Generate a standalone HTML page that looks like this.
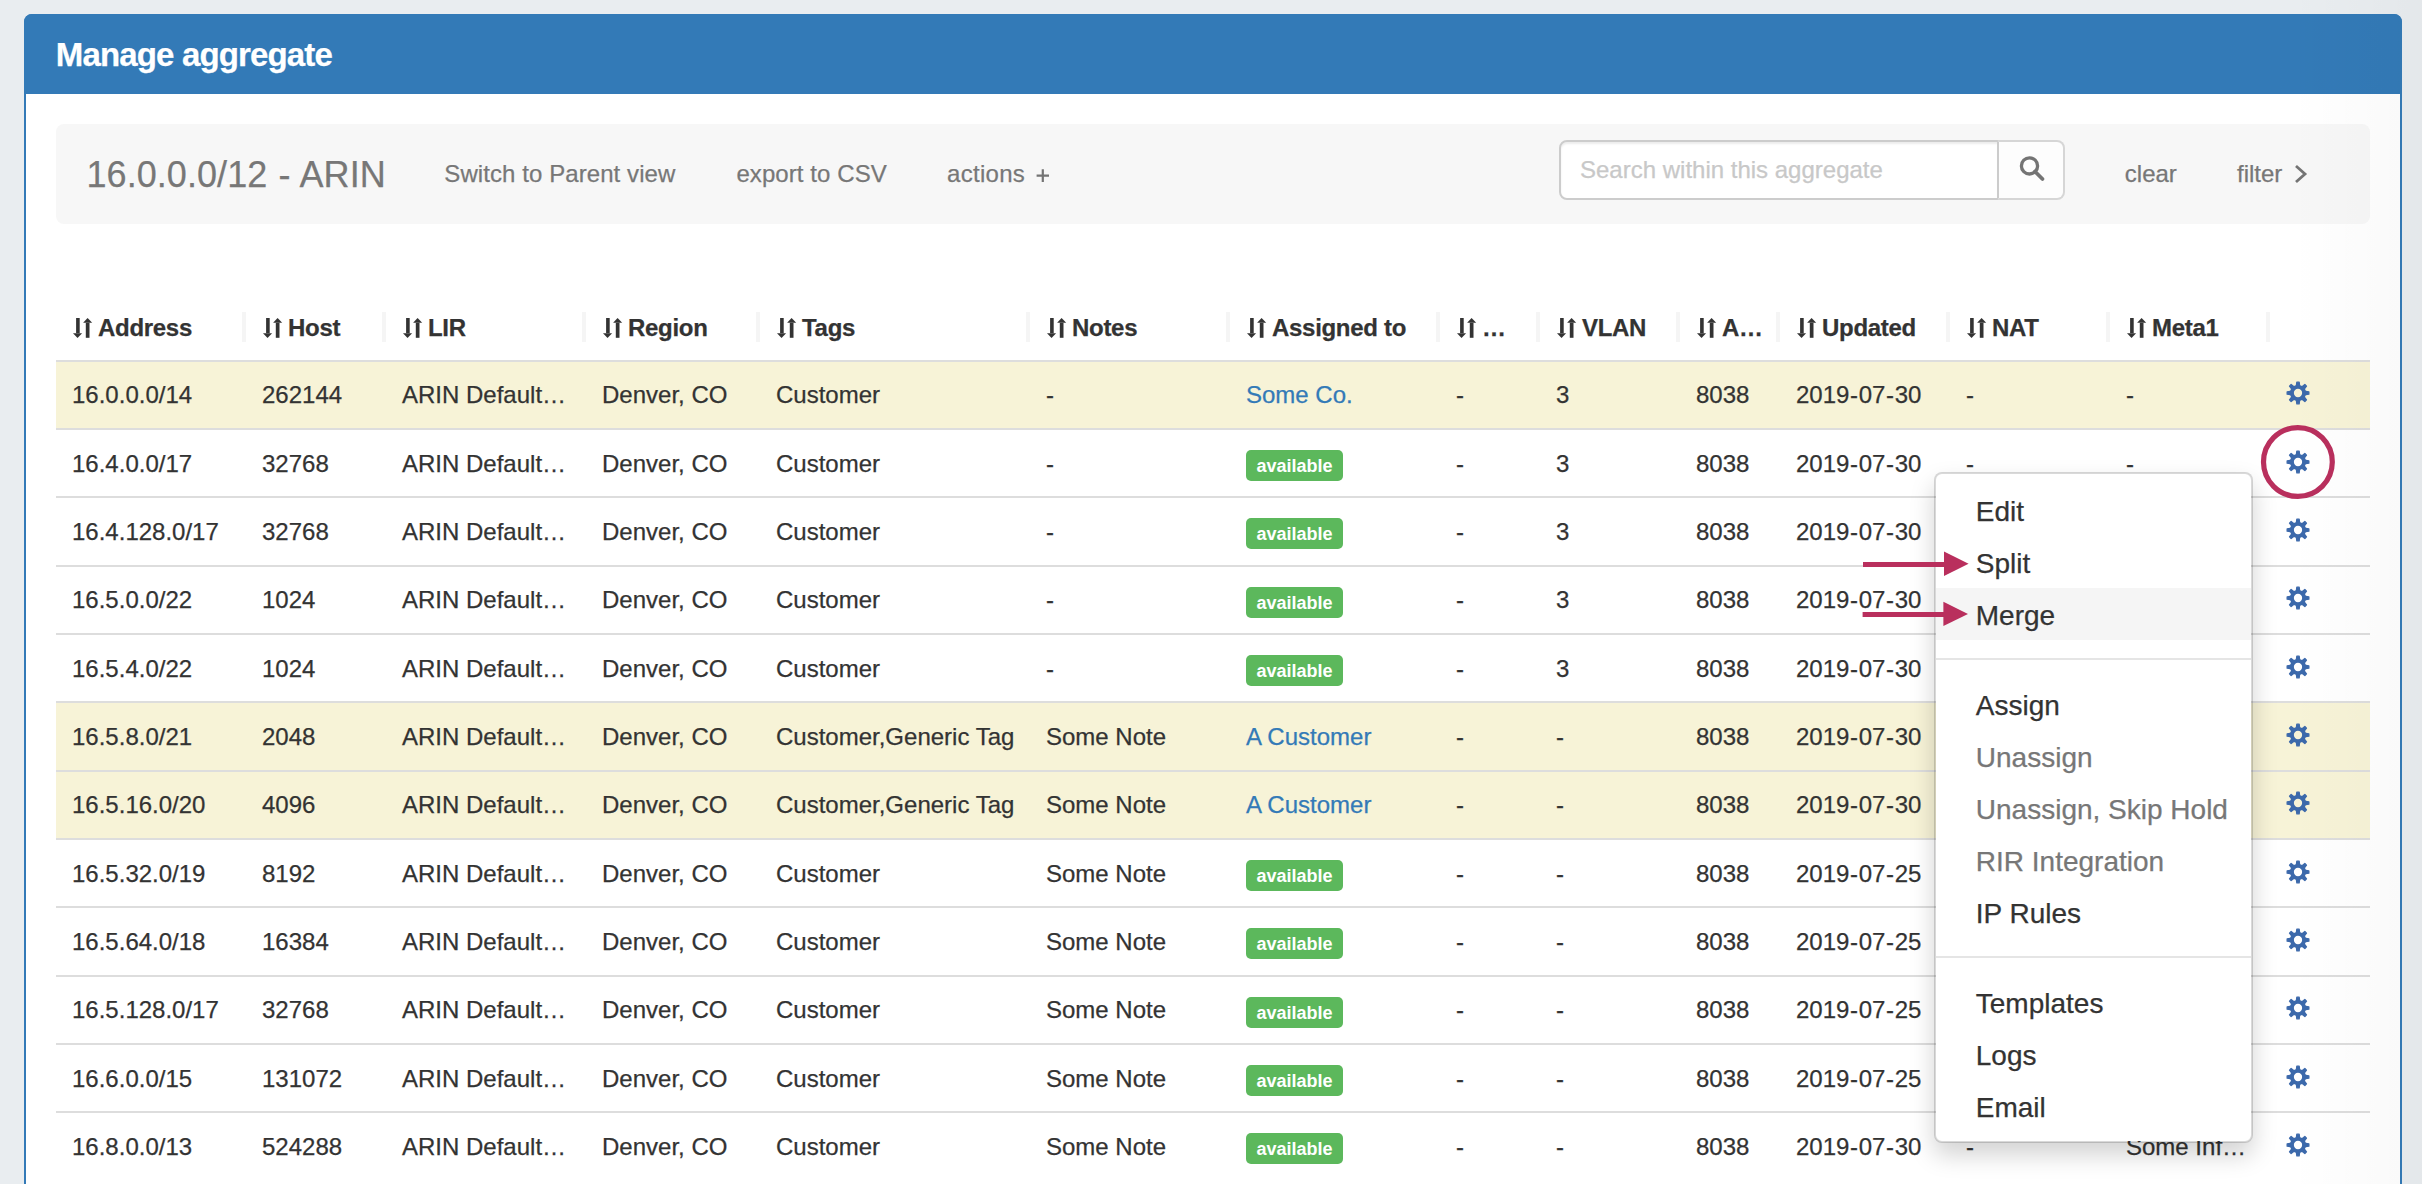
<!DOCTYPE html>
<html><head><meta charset="utf-8"><title>Manage aggregate</title><style>
html,body{margin:0;padding:0;}
body{width:2422px;height:1184px;overflow:hidden;position:relative;background:#e9edf0;font-family:"Liberation Sans", sans-serif;}
.t{position:absolute;line-height:1;white-space:nowrap;-webkit-text-stroke:0.25px currentColor;}
.panel{position:absolute;left:24px;top:14px;width:2378px;height:1400px;box-sizing:border-box;border:2px solid #337ab7;border-radius:8px;background:#fff;}
.phead{position:absolute;left:24px;top:14px;width:2378px;height:80px;background:#337ab7;border-radius:8px 8px 0 0;}
.well{position:absolute;left:56px;top:124px;width:2314px;height:100px;background:#f7f7f7;border-radius:8px;}
.search{position:absolute;left:1559px;top:140px;width:441px;height:60px;box-sizing:border-box;border:2px solid #ccc;border-radius:8px 0 0 8px;background:#fff;box-shadow:inset 0 2px 2px rgba(0,0,0,.075);}
.sbtn{position:absolute;left:1997px;top:140px;width:68px;height:60px;box-sizing:border-box;border:2px solid #d6d6d6;border-left-color:#ccc;border-radius:0 8px 8px 0;background:#fdfdfd;}
.sep{position:absolute;top:312px;width:3.5px;height:30px;background:#f5f5f5;}
.ico{position:absolute;width:20px;height:20px;}
.ico svg{display:block}
.hl{position:absolute;left:56px;width:2314px;height:2px;background:#ddd;}
.yrow{position:absolute;left:56px;width:2314px;background:#f7f3d7;}
.badge{position:absolute;width:97px;height:31px;background:#5cb85c;border-radius:5px;color:#fff;font-weight:bold;font-size:18px;line-height:33px;text-align:center;}
.gear{position:absolute;width:26px;height:26px;}
.gear svg{display:block}
.menu{position:absolute;left:1934px;top:472px;width:319px;height:671px;box-sizing:border-box;border:2px solid rgba(0,0,0,.15);border-radius:8px;background:#fff;box-shadow:0 12px 24px rgba(0,0,0,.175);background-clip:padding-box;}
.mhl{position:absolute;left:1936px;top:588px;width:315px;height:52px;background:#f5f5f5;}
.div1{position:absolute;left:1936px;width:315px;height:2px;background:#e5e5e5;}
.ann{position:absolute;left:0;top:0;}
.vig{position:absolute;left:2290px;top:0;width:132px;height:1184px;background:linear-gradient(to right,rgba(0,0,0,0),rgba(0,0,0,.024));pointer-events:none;}
</style></head>
<body>
<div class="panel"></div><div class="phead"></div><div class="t" style="left:55.80px;top:38.47px;font-size:33px;color:#fff;font-weight:bold;letter-spacing:-0.85px;">Manage aggregate</div>
<div class="well"></div><div class="t" style="left:86.50px;top:156.53px;font-size:36px;color:#777;font-weight:normal;letter-spacing:0.06px;">16.0.0.0/12 <span style="margin:0 1px">-</span> ARIN</div>
<div class="t" style="left:444.30px;top:162.18px;font-size:24px;color:#777;font-weight:normal;letter-spacing:0.08px;">Switch to Parent view</div>
<div class="t" style="left:736.40px;top:162.18px;font-size:24px;color:#777;font-weight:normal;letter-spacing:0.08px;">export to CSV</div>
<div class="t" style="left:947.00px;top:162.18px;font-size:24px;color:#777;font-weight:normal;letter-spacing:0.3px;">actions</div>
<div class="search"></div><div class="sbtn"></div><div class="t" style="left:1580.00px;top:158.18px;font-size:24px;color:#c8c8c8;font-weight:normal;">Search within this aggregate</div>
<div class="t" style="left:2124.80px;top:162.18px;font-size:24px;color:#777;font-weight:normal;">clear</div>
<div class="t" style="left:2237.00px;top:162.18px;font-size:24px;color:#777;font-weight:normal;">filter</div>
<svg class="ann" width="2422" height="300"><circle cx="2029.5" cy="165.9" r="8.1" fill="none" stroke="#747474" stroke-width="3.3"/><line x1="2035" y1="171.5" x2="2042.5" y2="179" stroke="#747474" stroke-width="3.8" stroke-linecap="round"/><path d="M1036.6,175.6 H1049 M1042.8,169.2 V182" stroke="#747474" stroke-width="2.2"/><polyline points="2296,166 2305,174 2296,182" fill="none" stroke="#747474" stroke-width="2.8"/></svg><div class="sep" style="left:242.25px"></div><div class="sep" style="left:382.25px"></div><div class="sep" style="left:582.25px"></div><div class="sep" style="left:756.25px"></div><div class="sep" style="left:1026.25px"></div><div class="sep" style="left:1226.25px"></div><div class="sep" style="left:1436.25px"></div><div class="sep" style="left:1536.25px"></div><div class="sep" style="left:1676.25px"></div><div class="sep" style="left:1776.25px"></div><div class="sep" style="left:1946.25px"></div><div class="sep" style="left:2106.25px"></div><div class="sep" style="left:2266.25px"></div><div class="ico" style="left:72.60px;top:318px"><svg width="20" height="20" viewBox="0 0 20 20"><rect x="3.1" y="0" width="3.6" height="15.2" fill="#333"/><polygon points="0,15.2 9.1,15.2 4.55,20" fill="#333"/><polygon points="14.6,0 10.1,4.8 19.2,4.8" fill="#333"/><rect x="12.8" y="4.8" width="3.7" height="15" fill="#333"/></svg></div><div class="t" style="left:98.00px;top:316.08px;font-size:24px;color:#333;font-weight:bold;letter-spacing:-0.3px;">Address</div>
<div class="ico" style="left:262.60px;top:318px"><svg width="20" height="20" viewBox="0 0 20 20"><rect x="3.1" y="0" width="3.6" height="15.2" fill="#333"/><polygon points="0,15.2 9.1,15.2 4.55,20" fill="#333"/><polygon points="14.6,0 10.1,4.8 19.2,4.8" fill="#333"/><rect x="12.8" y="4.8" width="3.7" height="15" fill="#333"/></svg></div><div class="t" style="left:288.00px;top:316.08px;font-size:24px;color:#333;font-weight:bold;letter-spacing:-0.3px;">Host</div>
<div class="ico" style="left:402.60px;top:318px"><svg width="20" height="20" viewBox="0 0 20 20"><rect x="3.1" y="0" width="3.6" height="15.2" fill="#333"/><polygon points="0,15.2 9.1,15.2 4.55,20" fill="#333"/><polygon points="14.6,0 10.1,4.8 19.2,4.8" fill="#333"/><rect x="12.8" y="4.8" width="3.7" height="15" fill="#333"/></svg></div><div class="t" style="left:428.00px;top:316.08px;font-size:24px;color:#333;font-weight:bold;letter-spacing:-0.3px;">LIR</div>
<div class="ico" style="left:602.60px;top:318px"><svg width="20" height="20" viewBox="0 0 20 20"><rect x="3.1" y="0" width="3.6" height="15.2" fill="#333"/><polygon points="0,15.2 9.1,15.2 4.55,20" fill="#333"/><polygon points="14.6,0 10.1,4.8 19.2,4.8" fill="#333"/><rect x="12.8" y="4.8" width="3.7" height="15" fill="#333"/></svg></div><div class="t" style="left:628.00px;top:316.08px;font-size:24px;color:#333;font-weight:bold;letter-spacing:-0.3px;">Region</div>
<div class="ico" style="left:776.60px;top:318px"><svg width="20" height="20" viewBox="0 0 20 20"><rect x="3.1" y="0" width="3.6" height="15.2" fill="#333"/><polygon points="0,15.2 9.1,15.2 4.55,20" fill="#333"/><polygon points="14.6,0 10.1,4.8 19.2,4.8" fill="#333"/><rect x="12.8" y="4.8" width="3.7" height="15" fill="#333"/></svg></div><div class="t" style="left:802.00px;top:316.08px;font-size:24px;color:#333;font-weight:bold;letter-spacing:-0.3px;">Tags</div>
<div class="ico" style="left:1046.60px;top:318px"><svg width="20" height="20" viewBox="0 0 20 20"><rect x="3.1" y="0" width="3.6" height="15.2" fill="#333"/><polygon points="0,15.2 9.1,15.2 4.55,20" fill="#333"/><polygon points="14.6,0 10.1,4.8 19.2,4.8" fill="#333"/><rect x="12.8" y="4.8" width="3.7" height="15" fill="#333"/></svg></div><div class="t" style="left:1072.00px;top:316.08px;font-size:24px;color:#333;font-weight:bold;letter-spacing:-0.3px;">Notes</div>
<div class="ico" style="left:1246.60px;top:318px"><svg width="20" height="20" viewBox="0 0 20 20"><rect x="3.1" y="0" width="3.6" height="15.2" fill="#333"/><polygon points="0,15.2 9.1,15.2 4.55,20" fill="#333"/><polygon points="14.6,0 10.1,4.8 19.2,4.8" fill="#333"/><rect x="12.8" y="4.8" width="3.7" height="15" fill="#333"/></svg></div><div class="t" style="left:1272.00px;top:316.08px;font-size:24px;color:#333;font-weight:bold;letter-spacing:-0.3px;">Assigned to</div>
<div class="ico" style="left:1456.60px;top:318px"><svg width="20" height="20" viewBox="0 0 20 20"><rect x="3.1" y="0" width="3.6" height="15.2" fill="#333"/><polygon points="0,15.2 9.1,15.2 4.55,20" fill="#333"/><polygon points="14.6,0 10.1,4.8 19.2,4.8" fill="#333"/><rect x="12.8" y="4.8" width="3.7" height="15" fill="#333"/></svg></div><div class="t" style="left:1482.00px;top:316.08px;font-size:24px;color:#333;font-weight:bold;letter-spacing:-0.3px;">…</div>
<div class="ico" style="left:1556.60px;top:318px"><svg width="20" height="20" viewBox="0 0 20 20"><rect x="3.1" y="0" width="3.6" height="15.2" fill="#333"/><polygon points="0,15.2 9.1,15.2 4.55,20" fill="#333"/><polygon points="14.6,0 10.1,4.8 19.2,4.8" fill="#333"/><rect x="12.8" y="4.8" width="3.7" height="15" fill="#333"/></svg></div><div class="t" style="left:1582.00px;top:316.08px;font-size:24px;color:#333;font-weight:bold;letter-spacing:-0.3px;">VLAN</div>
<div class="ico" style="left:1696.60px;top:318px"><svg width="20" height="20" viewBox="0 0 20 20"><rect x="3.1" y="0" width="3.6" height="15.2" fill="#333"/><polygon points="0,15.2 9.1,15.2 4.55,20" fill="#333"/><polygon points="14.6,0 10.1,4.8 19.2,4.8" fill="#333"/><rect x="12.8" y="4.8" width="3.7" height="15" fill="#333"/></svg></div><div class="t" style="left:1722.00px;top:316.08px;font-size:24px;color:#333;font-weight:bold;letter-spacing:-0.3px;">A…</div>
<div class="ico" style="left:1796.60px;top:318px"><svg width="20" height="20" viewBox="0 0 20 20"><rect x="3.1" y="0" width="3.6" height="15.2" fill="#333"/><polygon points="0,15.2 9.1,15.2 4.55,20" fill="#333"/><polygon points="14.6,0 10.1,4.8 19.2,4.8" fill="#333"/><rect x="12.8" y="4.8" width="3.7" height="15" fill="#333"/></svg></div><div class="t" style="left:1822.00px;top:316.08px;font-size:24px;color:#333;font-weight:bold;letter-spacing:-0.3px;">Updated</div>
<div class="ico" style="left:1966.60px;top:318px"><svg width="20" height="20" viewBox="0 0 20 20"><rect x="3.1" y="0" width="3.6" height="15.2" fill="#333"/><polygon points="0,15.2 9.1,15.2 4.55,20" fill="#333"/><polygon points="14.6,0 10.1,4.8 19.2,4.8" fill="#333"/><rect x="12.8" y="4.8" width="3.7" height="15" fill="#333"/></svg></div><div class="t" style="left:1992.00px;top:316.08px;font-size:24px;color:#333;font-weight:bold;letter-spacing:-0.3px;">NAT</div>
<div class="ico" style="left:2126.60px;top:318px"><svg width="20" height="20" viewBox="0 0 20 20"><rect x="3.1" y="0" width="3.6" height="15.2" fill="#333"/><polygon points="0,15.2 9.1,15.2 4.55,20" fill="#333"/><polygon points="14.6,0 10.1,4.8 19.2,4.8" fill="#333"/><rect x="12.8" y="4.8" width="3.7" height="15" fill="#333"/></svg></div><div class="t" style="left:2152.00px;top:316.08px;font-size:24px;color:#333;font-weight:bold;letter-spacing:-0.3px;">Meta1</div>
<div class="yrow" style="top:362px;height:66px"></div><div class="hl" style="top:360px"></div><div class="t" style="left:72.00px;top:383.45px;font-size:24px;color:#333;font-weight:normal;">16.0.0.0/14</div>
<div class="t" style="left:262.00px;top:383.45px;font-size:24px;color:#333;font-weight:normal;">262144</div>
<div class="t" style="left:402.00px;top:383.45px;font-size:24px;color:#333;font-weight:normal;">ARIN Default…</div>
<div class="t" style="left:602.00px;top:383.45px;font-size:24px;color:#333;font-weight:normal;">Denver, CO</div>
<div class="t" style="left:776.00px;top:383.45px;font-size:24px;color:#333;font-weight:normal;">Customer</div>
<div class="t" style="left:1046.00px;top:383.45px;font-size:24px;color:#333;font-weight:normal;">-</div>
<div class="t" style="left:1246.00px;top:383.45px;font-size:24px;color:#337ab7;font-weight:normal;">Some Co.</div>
<div class="t" style="left:1456.00px;top:383.45px;font-size:24px;color:#333;font-weight:normal;">-</div>
<div class="t" style="left:1556.00px;top:383.45px;font-size:24px;color:#333;font-weight:normal;">3</div>
<div class="t" style="left:1696.00px;top:383.45px;font-size:24px;color:#333;font-weight:normal;">8038</div>
<div class="t" style="left:1796.00px;top:383.45px;font-size:24px;color:#333;font-weight:normal;">2019<span style="margin:0 0.67px">-</span>07<span style="margin:0 0.67px">-</span>30</div>
<div class="t" style="left:1966.00px;top:383.45px;font-size:24px;color:#333;font-weight:normal;">-</div>
<div class="t" style="left:2126.00px;top:383.45px;font-size:24px;color:#333;font-weight:normal;">-</div>
<div class="gear" style="left:2285px;top:380.17px"><svg width="26" height="26" viewBox="-13 -13 26 26"><path d="M6.50,-1.75 L10.85,-1.15 L10.85,1.15 L6.50,1.75Z M5.83,3.36 L8.49,6.86 L6.86,8.49 L3.36,5.83Z M1.75,6.50 L1.15,10.85 L-1.15,10.85 L-1.75,6.50Z M-3.36,5.83 L-6.86,8.49 L-8.49,6.86 L-5.83,3.36Z M-6.50,1.75 L-10.85,1.15 L-10.85,-1.15 L-6.50,-1.75Z M-5.83,-3.36 L-8.49,-6.86 L-6.86,-8.49 L-3.36,-5.83Z M-1.75,-6.50 L-1.15,-10.85 L1.15,-10.85 L1.75,-6.50Z M3.36,-5.83 L6.86,-8.49 L8.49,-6.86 L5.83,-3.36Z " fill="#3c69ab" stroke="#3c69ab" stroke-width="1.3" stroke-linejoin="round"/><circle r="6.1" fill="none" stroke="#3c69ab" stroke-width="3.9"/></svg></div><div class="hl" style="top:428px"></div><div class="t" style="left:72.00px;top:451.79px;font-size:24px;color:#333;font-weight:normal;">16.4.0.0/17</div>
<div class="t" style="left:262.00px;top:451.79px;font-size:24px;color:#333;font-weight:normal;">32768</div>
<div class="t" style="left:402.00px;top:451.79px;font-size:24px;color:#333;font-weight:normal;">ARIN Default…</div>
<div class="t" style="left:602.00px;top:451.79px;font-size:24px;color:#333;font-weight:normal;">Denver, CO</div>
<div class="t" style="left:776.00px;top:451.79px;font-size:24px;color:#333;font-weight:normal;">Customer</div>
<div class="t" style="left:1046.00px;top:451.79px;font-size:24px;color:#333;font-weight:normal;">-</div>
<div class="badge" style="left:1246px;top:450px">available</div><div class="t" style="left:1456.00px;top:451.79px;font-size:24px;color:#333;font-weight:normal;">-</div>
<div class="t" style="left:1556.00px;top:451.79px;font-size:24px;color:#333;font-weight:normal;">3</div>
<div class="t" style="left:1696.00px;top:451.79px;font-size:24px;color:#333;font-weight:normal;">8038</div>
<div class="t" style="left:1796.00px;top:451.79px;font-size:24px;color:#333;font-weight:normal;">2019<span style="margin:0 0.67px">-</span>07<span style="margin:0 0.67px">-</span>30</div>
<div class="t" style="left:1966.00px;top:451.79px;font-size:24px;color:#333;font-weight:normal;">-</div>
<div class="t" style="left:2126.00px;top:451.79px;font-size:24px;color:#333;font-weight:normal;">-</div>
<div class="gear" style="left:2285px;top:448.50px"><svg width="26" height="26" viewBox="-13 -13 26 26"><path d="M6.50,-1.75 L10.85,-1.15 L10.85,1.15 L6.50,1.75Z M5.83,3.36 L8.49,6.86 L6.86,8.49 L3.36,5.83Z M1.75,6.50 L1.15,10.85 L-1.15,10.85 L-1.75,6.50Z M-3.36,5.83 L-6.86,8.49 L-8.49,6.86 L-5.83,3.36Z M-6.50,1.75 L-10.85,1.15 L-10.85,-1.15 L-6.50,-1.75Z M-5.83,-3.36 L-8.49,-6.86 L-6.86,-8.49 L-3.36,-5.83Z M-1.75,-6.50 L-1.15,-10.85 L1.15,-10.85 L1.75,-6.50Z M3.36,-5.83 L6.86,-8.49 L8.49,-6.86 L5.83,-3.36Z " fill="#3c69ab" stroke="#3c69ab" stroke-width="1.3" stroke-linejoin="round"/><circle r="6.1" fill="none" stroke="#3c69ab" stroke-width="3.9"/></svg></div><div class="hl" style="top:496px"></div><div class="t" style="left:72.00px;top:520.12px;font-size:24px;color:#333;font-weight:normal;">16.4.128.0/17</div>
<div class="t" style="left:262.00px;top:520.12px;font-size:24px;color:#333;font-weight:normal;">32768</div>
<div class="t" style="left:402.00px;top:520.12px;font-size:24px;color:#333;font-weight:normal;">ARIN Default…</div>
<div class="t" style="left:602.00px;top:520.12px;font-size:24px;color:#333;font-weight:normal;">Denver, CO</div>
<div class="t" style="left:776.00px;top:520.12px;font-size:24px;color:#333;font-weight:normal;">Customer</div>
<div class="t" style="left:1046.00px;top:520.12px;font-size:24px;color:#333;font-weight:normal;">-</div>
<div class="badge" style="left:1246px;top:518px">available</div><div class="t" style="left:1456.00px;top:520.12px;font-size:24px;color:#333;font-weight:normal;">-</div>
<div class="t" style="left:1556.00px;top:520.12px;font-size:24px;color:#333;font-weight:normal;">3</div>
<div class="t" style="left:1696.00px;top:520.12px;font-size:24px;color:#333;font-weight:normal;">8038</div>
<div class="t" style="left:1796.00px;top:520.12px;font-size:24px;color:#333;font-weight:normal;">2019<span style="margin:0 0.67px">-</span>07<span style="margin:0 0.67px">-</span>30</div>
<div class="t" style="left:1966.00px;top:520.12px;font-size:24px;color:#333;font-weight:normal;">-</div>
<div class="t" style="left:2126.00px;top:520.12px;font-size:24px;color:#333;font-weight:normal;">-</div>
<div class="gear" style="left:2285px;top:516.84px"><svg width="26" height="26" viewBox="-13 -13 26 26"><path d="M6.50,-1.75 L10.85,-1.15 L10.85,1.15 L6.50,1.75Z M5.83,3.36 L8.49,6.86 L6.86,8.49 L3.36,5.83Z M1.75,6.50 L1.15,10.85 L-1.15,10.85 L-1.75,6.50Z M-3.36,5.83 L-6.86,8.49 L-8.49,6.86 L-5.83,3.36Z M-6.50,1.75 L-10.85,1.15 L-10.85,-1.15 L-6.50,-1.75Z M-5.83,-3.36 L-8.49,-6.86 L-6.86,-8.49 L-3.36,-5.83Z M-1.75,-6.50 L-1.15,-10.85 L1.15,-10.85 L1.75,-6.50Z M3.36,-5.83 L6.86,-8.49 L8.49,-6.86 L5.83,-3.36Z " fill="#3c69ab" stroke="#3c69ab" stroke-width="1.3" stroke-linejoin="round"/><circle r="6.1" fill="none" stroke="#3c69ab" stroke-width="3.9"/></svg></div><div class="hl" style="top:565px"></div><div class="t" style="left:72.00px;top:588.45px;font-size:24px;color:#333;font-weight:normal;">16.5.0.0/22</div>
<div class="t" style="left:262.00px;top:588.45px;font-size:24px;color:#333;font-weight:normal;">1024</div>
<div class="t" style="left:402.00px;top:588.45px;font-size:24px;color:#333;font-weight:normal;">ARIN Default…</div>
<div class="t" style="left:602.00px;top:588.45px;font-size:24px;color:#333;font-weight:normal;">Denver, CO</div>
<div class="t" style="left:776.00px;top:588.45px;font-size:24px;color:#333;font-weight:normal;">Customer</div>
<div class="t" style="left:1046.00px;top:588.45px;font-size:24px;color:#333;font-weight:normal;">-</div>
<div class="badge" style="left:1246px;top:587px">available</div><div class="t" style="left:1456.00px;top:588.45px;font-size:24px;color:#333;font-weight:normal;">-</div>
<div class="t" style="left:1556.00px;top:588.45px;font-size:24px;color:#333;font-weight:normal;">3</div>
<div class="t" style="left:1696.00px;top:588.45px;font-size:24px;color:#333;font-weight:normal;">8038</div>
<div class="t" style="left:1796.00px;top:588.45px;font-size:24px;color:#333;font-weight:normal;">2019<span style="margin:0 0.67px">-</span>07<span style="margin:0 0.67px">-</span>30</div>
<div class="t" style="left:1966.00px;top:588.45px;font-size:24px;color:#333;font-weight:normal;">-</div>
<div class="t" style="left:2126.00px;top:588.45px;font-size:24px;color:#333;font-weight:normal;">-</div>
<div class="gear" style="left:2285px;top:585.17px"><svg width="26" height="26" viewBox="-13 -13 26 26"><path d="M6.50,-1.75 L10.85,-1.15 L10.85,1.15 L6.50,1.75Z M5.83,3.36 L8.49,6.86 L6.86,8.49 L3.36,5.83Z M1.75,6.50 L1.15,10.85 L-1.15,10.85 L-1.75,6.50Z M-3.36,5.83 L-6.86,8.49 L-8.49,6.86 L-5.83,3.36Z M-6.50,1.75 L-10.85,1.15 L-10.85,-1.15 L-6.50,-1.75Z M-5.83,-3.36 L-8.49,-6.86 L-6.86,-8.49 L-3.36,-5.83Z M-1.75,-6.50 L-1.15,-10.85 L1.15,-10.85 L1.75,-6.50Z M3.36,-5.83 L6.86,-8.49 L8.49,-6.86 L5.83,-3.36Z " fill="#3c69ab" stroke="#3c69ab" stroke-width="1.3" stroke-linejoin="round"/><circle r="6.1" fill="none" stroke="#3c69ab" stroke-width="3.9"/></svg></div><div class="hl" style="top:633px"></div><div class="t" style="left:72.00px;top:656.79px;font-size:24px;color:#333;font-weight:normal;">16.5.4.0/22</div>
<div class="t" style="left:262.00px;top:656.79px;font-size:24px;color:#333;font-weight:normal;">1024</div>
<div class="t" style="left:402.00px;top:656.79px;font-size:24px;color:#333;font-weight:normal;">ARIN Default…</div>
<div class="t" style="left:602.00px;top:656.79px;font-size:24px;color:#333;font-weight:normal;">Denver, CO</div>
<div class="t" style="left:776.00px;top:656.79px;font-size:24px;color:#333;font-weight:normal;">Customer</div>
<div class="t" style="left:1046.00px;top:656.79px;font-size:24px;color:#333;font-weight:normal;">-</div>
<div class="badge" style="left:1246px;top:655px">available</div><div class="t" style="left:1456.00px;top:656.79px;font-size:24px;color:#333;font-weight:normal;">-</div>
<div class="t" style="left:1556.00px;top:656.79px;font-size:24px;color:#333;font-weight:normal;">3</div>
<div class="t" style="left:1696.00px;top:656.79px;font-size:24px;color:#333;font-weight:normal;">8038</div>
<div class="t" style="left:1796.00px;top:656.79px;font-size:24px;color:#333;font-weight:normal;">2019<span style="margin:0 0.67px">-</span>07<span style="margin:0 0.67px">-</span>30</div>
<div class="t" style="left:1966.00px;top:656.79px;font-size:24px;color:#333;font-weight:normal;">-</div>
<div class="t" style="left:2126.00px;top:656.79px;font-size:24px;color:#333;font-weight:normal;">-</div>
<div class="gear" style="left:2285px;top:653.50px"><svg width="26" height="26" viewBox="-13 -13 26 26"><path d="M6.50,-1.75 L10.85,-1.15 L10.85,1.15 L6.50,1.75Z M5.83,3.36 L8.49,6.86 L6.86,8.49 L3.36,5.83Z M1.75,6.50 L1.15,10.85 L-1.15,10.85 L-1.75,6.50Z M-3.36,5.83 L-6.86,8.49 L-8.49,6.86 L-5.83,3.36Z M-6.50,1.75 L-10.85,1.15 L-10.85,-1.15 L-6.50,-1.75Z M-5.83,-3.36 L-8.49,-6.86 L-6.86,-8.49 L-3.36,-5.83Z M-1.75,-6.50 L-1.15,-10.85 L1.15,-10.85 L1.75,-6.50Z M3.36,-5.83 L6.86,-8.49 L8.49,-6.86 L5.83,-3.36Z " fill="#3c69ab" stroke="#3c69ab" stroke-width="1.3" stroke-linejoin="round"/><circle r="6.1" fill="none" stroke="#3c69ab" stroke-width="3.9"/></svg></div><div class="yrow" style="top:703px;height:67px"></div><div class="hl" style="top:701px"></div><div class="t" style="left:72.00px;top:725.12px;font-size:24px;color:#333;font-weight:normal;">16.5.8.0/21</div>
<div class="t" style="left:262.00px;top:725.12px;font-size:24px;color:#333;font-weight:normal;">2048</div>
<div class="t" style="left:402.00px;top:725.12px;font-size:24px;color:#333;font-weight:normal;">ARIN Default…</div>
<div class="t" style="left:602.00px;top:725.12px;font-size:24px;color:#333;font-weight:normal;">Denver, CO</div>
<div class="t" style="left:776.00px;top:725.12px;font-size:24px;color:#333;font-weight:normal;">Customer,Generic Tag</div>
<div class="t" style="left:1046.00px;top:725.12px;font-size:24px;color:#333;font-weight:normal;">Some Note</div>
<div class="t" style="left:1246.00px;top:725.12px;font-size:24px;color:#337ab7;font-weight:normal;">A Customer</div>
<div class="t" style="left:1456.00px;top:725.12px;font-size:24px;color:#333;font-weight:normal;">-</div>
<div class="t" style="left:1556.00px;top:725.12px;font-size:24px;color:#333;font-weight:normal;">-</div>
<div class="t" style="left:1696.00px;top:725.12px;font-size:24px;color:#333;font-weight:normal;">8038</div>
<div class="t" style="left:1796.00px;top:725.12px;font-size:24px;color:#333;font-weight:normal;">2019<span style="margin:0 0.67px">-</span>07<span style="margin:0 0.67px">-</span>30</div>
<div class="t" style="left:1966.00px;top:725.12px;font-size:24px;color:#333;font-weight:normal;">-</div>
<div class="t" style="left:2126.00px;top:725.12px;font-size:24px;color:#333;font-weight:normal;">-</div>
<div class="gear" style="left:2285px;top:721.84px"><svg width="26" height="26" viewBox="-13 -13 26 26"><path d="M6.50,-1.75 L10.85,-1.15 L10.85,1.15 L6.50,1.75Z M5.83,3.36 L8.49,6.86 L6.86,8.49 L3.36,5.83Z M1.75,6.50 L1.15,10.85 L-1.15,10.85 L-1.75,6.50Z M-3.36,5.83 L-6.86,8.49 L-8.49,6.86 L-5.83,3.36Z M-6.50,1.75 L-10.85,1.15 L-10.85,-1.15 L-6.50,-1.75Z M-5.83,-3.36 L-8.49,-6.86 L-6.86,-8.49 L-3.36,-5.83Z M-1.75,-6.50 L-1.15,-10.85 L1.15,-10.85 L1.75,-6.50Z M3.36,-5.83 L6.86,-8.49 L8.49,-6.86 L5.83,-3.36Z " fill="#3c69ab" stroke="#3c69ab" stroke-width="1.3" stroke-linejoin="round"/><circle r="6.1" fill="none" stroke="#3c69ab" stroke-width="3.9"/></svg></div><div class="yrow" style="top:772px;height:66px"></div><div class="hl" style="top:770px"></div><div class="t" style="left:72.00px;top:793.45px;font-size:24px;color:#333;font-weight:normal;">16.5.16.0/20</div>
<div class="t" style="left:262.00px;top:793.45px;font-size:24px;color:#333;font-weight:normal;">4096</div>
<div class="t" style="left:402.00px;top:793.45px;font-size:24px;color:#333;font-weight:normal;">ARIN Default…</div>
<div class="t" style="left:602.00px;top:793.45px;font-size:24px;color:#333;font-weight:normal;">Denver, CO</div>
<div class="t" style="left:776.00px;top:793.45px;font-size:24px;color:#333;font-weight:normal;">Customer,Generic Tag</div>
<div class="t" style="left:1046.00px;top:793.45px;font-size:24px;color:#333;font-weight:normal;">Some Note</div>
<div class="t" style="left:1246.00px;top:793.45px;font-size:24px;color:#337ab7;font-weight:normal;">A Customer</div>
<div class="t" style="left:1456.00px;top:793.45px;font-size:24px;color:#333;font-weight:normal;">-</div>
<div class="t" style="left:1556.00px;top:793.45px;font-size:24px;color:#333;font-weight:normal;">-</div>
<div class="t" style="left:1696.00px;top:793.45px;font-size:24px;color:#333;font-weight:normal;">8038</div>
<div class="t" style="left:1796.00px;top:793.45px;font-size:24px;color:#333;font-weight:normal;">2019<span style="margin:0 0.67px">-</span>07<span style="margin:0 0.67px">-</span>30</div>
<div class="t" style="left:1966.00px;top:793.45px;font-size:24px;color:#333;font-weight:normal;">-</div>
<div class="t" style="left:2126.00px;top:793.45px;font-size:24px;color:#333;font-weight:normal;">-</div>
<div class="gear" style="left:2285px;top:790.17px"><svg width="26" height="26" viewBox="-13 -13 26 26"><path d="M6.50,-1.75 L10.85,-1.15 L10.85,1.15 L6.50,1.75Z M5.83,3.36 L8.49,6.86 L6.86,8.49 L3.36,5.83Z M1.75,6.50 L1.15,10.85 L-1.15,10.85 L-1.75,6.50Z M-3.36,5.83 L-6.86,8.49 L-8.49,6.86 L-5.83,3.36Z M-6.50,1.75 L-10.85,1.15 L-10.85,-1.15 L-6.50,-1.75Z M-5.83,-3.36 L-8.49,-6.86 L-6.86,-8.49 L-3.36,-5.83Z M-1.75,-6.50 L-1.15,-10.85 L1.15,-10.85 L1.75,-6.50Z M3.36,-5.83 L6.86,-8.49 L8.49,-6.86 L5.83,-3.36Z " fill="#3c69ab" stroke="#3c69ab" stroke-width="1.3" stroke-linejoin="round"/><circle r="6.1" fill="none" stroke="#3c69ab" stroke-width="3.9"/></svg></div><div class="hl" style="top:838px"></div><div class="t" style="left:72.00px;top:861.79px;font-size:24px;color:#333;font-weight:normal;">16.5.32.0/19</div>
<div class="t" style="left:262.00px;top:861.79px;font-size:24px;color:#333;font-weight:normal;">8192</div>
<div class="t" style="left:402.00px;top:861.79px;font-size:24px;color:#333;font-weight:normal;">ARIN Default…</div>
<div class="t" style="left:602.00px;top:861.79px;font-size:24px;color:#333;font-weight:normal;">Denver, CO</div>
<div class="t" style="left:776.00px;top:861.79px;font-size:24px;color:#333;font-weight:normal;">Customer</div>
<div class="t" style="left:1046.00px;top:861.79px;font-size:24px;color:#333;font-weight:normal;">Some Note</div>
<div class="badge" style="left:1246px;top:860px">available</div><div class="t" style="left:1456.00px;top:861.79px;font-size:24px;color:#333;font-weight:normal;">-</div>
<div class="t" style="left:1556.00px;top:861.79px;font-size:24px;color:#333;font-weight:normal;">-</div>
<div class="t" style="left:1696.00px;top:861.79px;font-size:24px;color:#333;font-weight:normal;">8038</div>
<div class="t" style="left:1796.00px;top:861.79px;font-size:24px;color:#333;font-weight:normal;">2019<span style="margin:0 0.67px">-</span>07<span style="margin:0 0.67px">-</span>25</div>
<div class="t" style="left:1966.00px;top:861.79px;font-size:24px;color:#333;font-weight:normal;">-</div>
<div class="t" style="left:2126.00px;top:861.79px;font-size:24px;color:#333;font-weight:normal;">-</div>
<div class="gear" style="left:2285px;top:858.50px"><svg width="26" height="26" viewBox="-13 -13 26 26"><path d="M6.50,-1.75 L10.85,-1.15 L10.85,1.15 L6.50,1.75Z M5.83,3.36 L8.49,6.86 L6.86,8.49 L3.36,5.83Z M1.75,6.50 L1.15,10.85 L-1.15,10.85 L-1.75,6.50Z M-3.36,5.83 L-6.86,8.49 L-8.49,6.86 L-5.83,3.36Z M-6.50,1.75 L-10.85,1.15 L-10.85,-1.15 L-6.50,-1.75Z M-5.83,-3.36 L-8.49,-6.86 L-6.86,-8.49 L-3.36,-5.83Z M-1.75,-6.50 L-1.15,-10.85 L1.15,-10.85 L1.75,-6.50Z M3.36,-5.83 L6.86,-8.49 L8.49,-6.86 L5.83,-3.36Z " fill="#3c69ab" stroke="#3c69ab" stroke-width="1.3" stroke-linejoin="round"/><circle r="6.1" fill="none" stroke="#3c69ab" stroke-width="3.9"/></svg></div><div class="hl" style="top:906px"></div><div class="t" style="left:72.00px;top:930.12px;font-size:24px;color:#333;font-weight:normal;">16.5.64.0/18</div>
<div class="t" style="left:262.00px;top:930.12px;font-size:24px;color:#333;font-weight:normal;">16384</div>
<div class="t" style="left:402.00px;top:930.12px;font-size:24px;color:#333;font-weight:normal;">ARIN Default…</div>
<div class="t" style="left:602.00px;top:930.12px;font-size:24px;color:#333;font-weight:normal;">Denver, CO</div>
<div class="t" style="left:776.00px;top:930.12px;font-size:24px;color:#333;font-weight:normal;">Customer</div>
<div class="t" style="left:1046.00px;top:930.12px;font-size:24px;color:#333;font-weight:normal;">Some Note</div>
<div class="badge" style="left:1246px;top:928px">available</div><div class="t" style="left:1456.00px;top:930.12px;font-size:24px;color:#333;font-weight:normal;">-</div>
<div class="t" style="left:1556.00px;top:930.12px;font-size:24px;color:#333;font-weight:normal;">-</div>
<div class="t" style="left:1696.00px;top:930.12px;font-size:24px;color:#333;font-weight:normal;">8038</div>
<div class="t" style="left:1796.00px;top:930.12px;font-size:24px;color:#333;font-weight:normal;">2019<span style="margin:0 0.67px">-</span>07<span style="margin:0 0.67px">-</span>25</div>
<div class="t" style="left:1966.00px;top:930.12px;font-size:24px;color:#333;font-weight:normal;">-</div>
<div class="t" style="left:2126.00px;top:930.12px;font-size:24px;color:#333;font-weight:normal;">-</div>
<div class="gear" style="left:2285px;top:926.84px"><svg width="26" height="26" viewBox="-13 -13 26 26"><path d="M6.50,-1.75 L10.85,-1.15 L10.85,1.15 L6.50,1.75Z M5.83,3.36 L8.49,6.86 L6.86,8.49 L3.36,5.83Z M1.75,6.50 L1.15,10.85 L-1.15,10.85 L-1.75,6.50Z M-3.36,5.83 L-6.86,8.49 L-8.49,6.86 L-5.83,3.36Z M-6.50,1.75 L-10.85,1.15 L-10.85,-1.15 L-6.50,-1.75Z M-5.83,-3.36 L-8.49,-6.86 L-6.86,-8.49 L-3.36,-5.83Z M-1.75,-6.50 L-1.15,-10.85 L1.15,-10.85 L1.75,-6.50Z M3.36,-5.83 L6.86,-8.49 L8.49,-6.86 L5.83,-3.36Z " fill="#3c69ab" stroke="#3c69ab" stroke-width="1.3" stroke-linejoin="round"/><circle r="6.1" fill="none" stroke="#3c69ab" stroke-width="3.9"/></svg></div><div class="hl" style="top:975px"></div><div class="t" style="left:72.00px;top:998.45px;font-size:24px;color:#333;font-weight:normal;">16.5.128.0/17</div>
<div class="t" style="left:262.00px;top:998.45px;font-size:24px;color:#333;font-weight:normal;">32768</div>
<div class="t" style="left:402.00px;top:998.45px;font-size:24px;color:#333;font-weight:normal;">ARIN Default…</div>
<div class="t" style="left:602.00px;top:998.45px;font-size:24px;color:#333;font-weight:normal;">Denver, CO</div>
<div class="t" style="left:776.00px;top:998.45px;font-size:24px;color:#333;font-weight:normal;">Customer</div>
<div class="t" style="left:1046.00px;top:998.45px;font-size:24px;color:#333;font-weight:normal;">Some Note</div>
<div class="badge" style="left:1246px;top:997px">available</div><div class="t" style="left:1456.00px;top:998.45px;font-size:24px;color:#333;font-weight:normal;">-</div>
<div class="t" style="left:1556.00px;top:998.45px;font-size:24px;color:#333;font-weight:normal;">-</div>
<div class="t" style="left:1696.00px;top:998.45px;font-size:24px;color:#333;font-weight:normal;">8038</div>
<div class="t" style="left:1796.00px;top:998.45px;font-size:24px;color:#333;font-weight:normal;">2019<span style="margin:0 0.67px">-</span>07<span style="margin:0 0.67px">-</span>25</div>
<div class="t" style="left:1966.00px;top:998.45px;font-size:24px;color:#333;font-weight:normal;">-</div>
<div class="t" style="left:2126.00px;top:998.45px;font-size:24px;color:#333;font-weight:normal;">-</div>
<div class="gear" style="left:2285px;top:995.17px"><svg width="26" height="26" viewBox="-13 -13 26 26"><path d="M6.50,-1.75 L10.85,-1.15 L10.85,1.15 L6.50,1.75Z M5.83,3.36 L8.49,6.86 L6.86,8.49 L3.36,5.83Z M1.75,6.50 L1.15,10.85 L-1.15,10.85 L-1.75,6.50Z M-3.36,5.83 L-6.86,8.49 L-8.49,6.86 L-5.83,3.36Z M-6.50,1.75 L-10.85,1.15 L-10.85,-1.15 L-6.50,-1.75Z M-5.83,-3.36 L-8.49,-6.86 L-6.86,-8.49 L-3.36,-5.83Z M-1.75,-6.50 L-1.15,-10.85 L1.15,-10.85 L1.75,-6.50Z M3.36,-5.83 L6.86,-8.49 L8.49,-6.86 L5.83,-3.36Z " fill="#3c69ab" stroke="#3c69ab" stroke-width="1.3" stroke-linejoin="round"/><circle r="6.1" fill="none" stroke="#3c69ab" stroke-width="3.9"/></svg></div><div class="hl" style="top:1043px"></div><div class="t" style="left:72.00px;top:1066.79px;font-size:24px;color:#333;font-weight:normal;">16.6.0.0/15</div>
<div class="t" style="left:262.00px;top:1066.79px;font-size:24px;color:#333;font-weight:normal;">131072</div>
<div class="t" style="left:402.00px;top:1066.79px;font-size:24px;color:#333;font-weight:normal;">ARIN Default…</div>
<div class="t" style="left:602.00px;top:1066.79px;font-size:24px;color:#333;font-weight:normal;">Denver, CO</div>
<div class="t" style="left:776.00px;top:1066.79px;font-size:24px;color:#333;font-weight:normal;">Customer</div>
<div class="t" style="left:1046.00px;top:1066.79px;font-size:24px;color:#333;font-weight:normal;">Some Note</div>
<div class="badge" style="left:1246px;top:1065px">available</div><div class="t" style="left:1456.00px;top:1066.79px;font-size:24px;color:#333;font-weight:normal;">-</div>
<div class="t" style="left:1556.00px;top:1066.79px;font-size:24px;color:#333;font-weight:normal;">-</div>
<div class="t" style="left:1696.00px;top:1066.79px;font-size:24px;color:#333;font-weight:normal;">8038</div>
<div class="t" style="left:1796.00px;top:1066.79px;font-size:24px;color:#333;font-weight:normal;">2019<span style="margin:0 0.67px">-</span>07<span style="margin:0 0.67px">-</span>25</div>
<div class="t" style="left:1966.00px;top:1066.79px;font-size:24px;color:#333;font-weight:normal;">-</div>
<div class="t" style="left:2126.00px;top:1066.79px;font-size:24px;color:#333;font-weight:normal;">-</div>
<div class="gear" style="left:2285px;top:1063.50px"><svg width="26" height="26" viewBox="-13 -13 26 26"><path d="M6.50,-1.75 L10.85,-1.15 L10.85,1.15 L6.50,1.75Z M5.83,3.36 L8.49,6.86 L6.86,8.49 L3.36,5.83Z M1.75,6.50 L1.15,10.85 L-1.15,10.85 L-1.75,6.50Z M-3.36,5.83 L-6.86,8.49 L-8.49,6.86 L-5.83,3.36Z M-6.50,1.75 L-10.85,1.15 L-10.85,-1.15 L-6.50,-1.75Z M-5.83,-3.36 L-8.49,-6.86 L-6.86,-8.49 L-3.36,-5.83Z M-1.75,-6.50 L-1.15,-10.85 L1.15,-10.85 L1.75,-6.50Z M3.36,-5.83 L6.86,-8.49 L8.49,-6.86 L5.83,-3.36Z " fill="#3c69ab" stroke="#3c69ab" stroke-width="1.3" stroke-linejoin="round"/><circle r="6.1" fill="none" stroke="#3c69ab" stroke-width="3.9"/></svg></div><div class="hl" style="top:1111px"></div><div class="t" style="left:72.00px;top:1135.12px;font-size:24px;color:#333;font-weight:normal;">16.8.0.0/13</div>
<div class="t" style="left:262.00px;top:1135.12px;font-size:24px;color:#333;font-weight:normal;">524288</div>
<div class="t" style="left:402.00px;top:1135.12px;font-size:24px;color:#333;font-weight:normal;">ARIN Default…</div>
<div class="t" style="left:602.00px;top:1135.12px;font-size:24px;color:#333;font-weight:normal;">Denver, CO</div>
<div class="t" style="left:776.00px;top:1135.12px;font-size:24px;color:#333;font-weight:normal;">Customer</div>
<div class="t" style="left:1046.00px;top:1135.12px;font-size:24px;color:#333;font-weight:normal;">Some Note</div>
<div class="badge" style="left:1246px;top:1133px">available</div><div class="t" style="left:1456.00px;top:1135.12px;font-size:24px;color:#333;font-weight:normal;">-</div>
<div class="t" style="left:1556.00px;top:1135.12px;font-size:24px;color:#333;font-weight:normal;">-</div>
<div class="t" style="left:1696.00px;top:1135.12px;font-size:24px;color:#333;font-weight:normal;">8038</div>
<div class="t" style="left:1796.00px;top:1135.12px;font-size:24px;color:#333;font-weight:normal;">2019<span style="margin:0 0.67px">-</span>07<span style="margin:0 0.67px">-</span>30</div>
<div class="t" style="left:1966.00px;top:1135.12px;font-size:24px;color:#333;font-weight:normal;">-</div>
<div class="t" style="left:2126.00px;top:1135.12px;font-size:24px;color:#333;font-weight:normal;">Some Inf…</div>
<div class="gear" style="left:2285px;top:1131.84px"><svg width="26" height="26" viewBox="-13 -13 26 26"><path d="M6.50,-1.75 L10.85,-1.15 L10.85,1.15 L6.50,1.75Z M5.83,3.36 L8.49,6.86 L6.86,8.49 L3.36,5.83Z M1.75,6.50 L1.15,10.85 L-1.15,10.85 L-1.75,6.50Z M-3.36,5.83 L-6.86,8.49 L-8.49,6.86 L-5.83,3.36Z M-6.50,1.75 L-10.85,1.15 L-10.85,-1.15 L-6.50,-1.75Z M-5.83,-3.36 L-8.49,-6.86 L-6.86,-8.49 L-3.36,-5.83Z M-1.75,-6.50 L-1.15,-10.85 L1.15,-10.85 L1.75,-6.50Z M3.36,-5.83 L6.86,-8.49 L8.49,-6.86 L5.83,-3.36Z " fill="#3c69ab" stroke="#3c69ab" stroke-width="1.3" stroke-linejoin="round"/><circle r="6.1" fill="none" stroke="#3c69ab" stroke-width="3.9"/></svg></div><div class="menu"></div><div class="mhl"></div><div class="t" style="left:1975.80px;top:498.00px;font-size:28px;color:#333;font-weight:normal;">Edit</div>
<div class="t" style="left:1975.80px;top:550.00px;font-size:28px;color:#333;font-weight:normal;">Split</div>
<div class="t" style="left:1975.80px;top:602.00px;font-size:28px;color:#333;font-weight:normal;">Merge</div>
<div class="t" style="left:1975.80px;top:692.00px;font-size:28px;color:#333;font-weight:normal;">Assign</div>
<div class="t" style="left:1975.80px;top:744.00px;font-size:28px;color:#777;font-weight:normal;">Unassign</div>
<div class="t" style="left:1975.80px;top:796.00px;font-size:28px;color:#777;font-weight:normal;">Unassign, Skip Hold</div>
<div class="t" style="left:1975.80px;top:848.00px;font-size:28px;color:#777;font-weight:normal;">RIR Integration</div>
<div class="t" style="left:1975.80px;top:900.00px;font-size:28px;color:#333;font-weight:normal;">IP Rules</div>
<div class="t" style="left:1975.80px;top:990.00px;font-size:28px;color:#333;font-weight:normal;">Templates</div>
<div class="t" style="left:1975.80px;top:1042.00px;font-size:28px;color:#333;font-weight:normal;">Logs</div>
<div class="t" style="left:1975.80px;top:1094.00px;font-size:28px;color:#333;font-weight:normal;">Email</div>
<div class="div1" style="top:658px"></div><div class="div1" style="top:956px"></div><svg class="ann" width="2422" height="1184" viewBox="0 0 2422 1184"><circle cx="2297.9" cy="462" r="34.4" fill="none" stroke="#b92f5d" stroke-width="5.2"/><rect x="1863" y="562" width="82" height="5" fill="#b92f5d"/><polygon points="1944,551.4 1968.6,563.8 1944,576" fill="#b92f5d"/><rect x="1862.6" y="612" width="82" height="5" fill="#b92f5d"/><polygon points="1943.4,601.7 1968,614 1943.4,626.1" fill="#b92f5d"/></svg><div class="vig"></div>
</body></html>
